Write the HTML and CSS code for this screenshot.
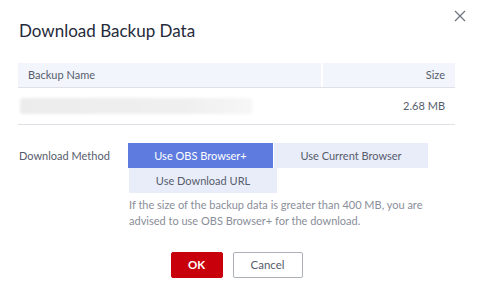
FILE: index.html
```html
<!DOCTYPE html>
<html>
<head>
<meta charset="utf-8">
<link rel="stylesheet" href="styles.css">
</head>
<body>
<div class="dialog">
  <button class="close" aria-label="Close">
    <svg width="12" height="12" viewBox="0 0 12 12"><path d="M1 1L11 11M11 1L1 11" stroke="#71757f" stroke-width="1.3" fill="none"/></svg>
  </button>
  <h1 class="title">Download Backup Data</h1>
  <table class="table">
    <thead>
      <tr><th class="name">Backup Name</th><th class="size">Size</th></tr>
    </thead>
    <tbody>
      <tr><td class="name"><span class="blur"></span></td><td class="size">2.68 MB</td></tr>
    </tbody>
  </table>
  <div class="field">
    <div class="label">Download Method</div>
    <div class="control">
      <div class="options">
        <button class="opt active">Use OBS Browser+</button>
        <button class="opt">Use Current Browser</button>
        <button class="opt third">Use Download URL</button>
      </div>
      <p class="hint">If the size of the backup data is greater than 400 MB, you are advised to use OBS Browser+ for the download.</p>
    </div>
  </div>
  <div class="footer">
    <button class="btn ok">OK</button>
    <button class="btn cancel">Cancel</button>
  </div>
</div>
</body>
</html>
```
FILE: styles.css
```css
* { box-sizing: border-box; }
html, body { margin: 0; padding: 0; background: #fff; }
body { font-family: "Lato", "Open Sans", sans-serif; font-size: 11px; color: #252b3a; }
.dialog { position: relative; width: 479px; height: 291px; padding: 17px 24px 0 18px; }
.close { position: absolute; top: 9px; right: 12px; width: 14px; height: 14px; padding: 0; border: 0; background: none; display: flex; align-items: center; justify-content: center; }
.title { margin: 0 0 0 1px; font-size: 17px; font-weight: 400; line-height: 27px; color: #252b3a; }
.table { margin-top: 19px; width: 437px; border-collapse: collapse; }
.table th { background: #f2f5fc; font-weight: 400; color: #575d6c; height: 24px; padding: 0 10px; border-bottom: 1px solid #dfe1e6; line-height: 23px; }
.table th.name { text-align: left; position: relative; width: 305px; }
.table th.name::after { content: ""; position: absolute; right: 0; top: 0; bottom: 0; width: 2px; background: #fff; }
.table th.size, .table td.size { text-align: right; }
.table td { height: 37px; padding: 0 10px; border-bottom: 1px solid #dfe1e6; color: #575d6c; }
.table td.name { padding-left: 2px; }
.blur { display: block; width: 232px; height: 16px; background: linear-gradient(90deg, #ececec, #efefef 70%, #f6f6f6); border-radius: 3px; filter: blur(1.5px); }
.field { display: flex; margin-top: 18px; }
.label { width: 110px; padding-left: 1px; color: #575d6c; line-height: 25px; }
.control { width: 300px; }
.options { display: flex; flex-wrap: wrap; width: 300px; }
.opt { font-family: inherit; font-size: 11px; height: 25px; border: 0; background: #e9edfa; color: #575d6c; padding: 0; }
.opt.active { width: 145px; background: #5e7ce0; color: #fff; margin-right: 1px; }
.opt:nth-child(2) { width: 154px; }
.opt.third { width: 148px; margin-left: 1px; }
.hint { margin: 4px 0 0 1px; color: #8a8e99; line-height: 16px; width: 310px; }
.footer { display: flex; justify-content: center; gap: 10px; margin-top: 23px; padding-left: 0; }
.btn { font-family: inherit; font-size: 11.5px; height: 26px; border-radius: 2px; padding: 0; }
.ok { width: 52px; background: #c7000b; border: 1px solid #c7000b; color: #fff; font-weight: 700; }
.cancel { width: 70px; background: #fff; border: 1px solid #adb0b8; color: #575d6c; }
```
